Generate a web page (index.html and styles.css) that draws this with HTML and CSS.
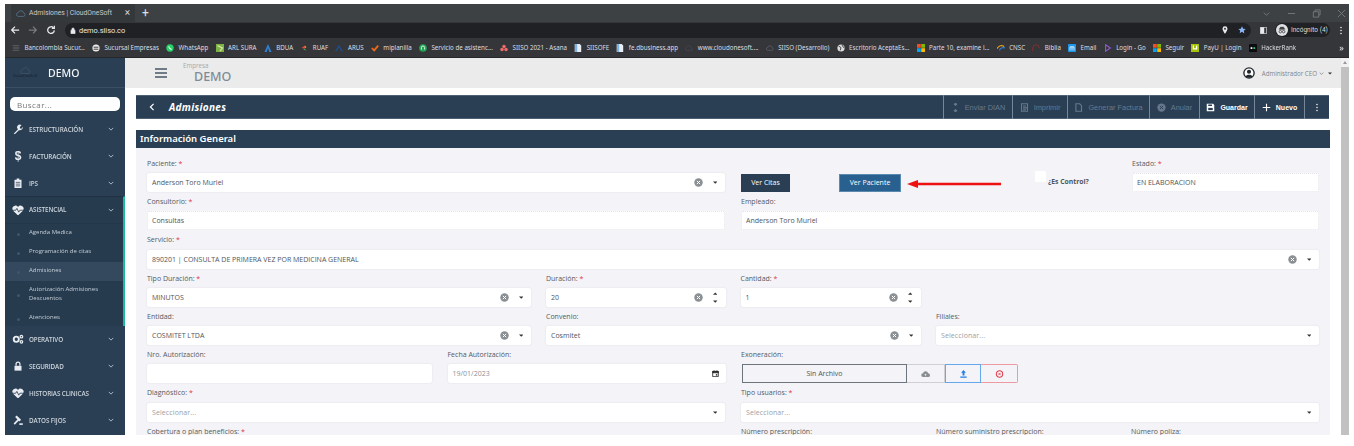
FILE: index.html
```html
<!DOCTYPE html>
<html lang="es">
<head>
<meta charset="utf-8">
<title>Admisiones | CloudOneSoft</title>
<link rel="stylesheet" href="styles.css">
</head>
<body>
<svg class="defs" aria-hidden="true">
  <symbol id="cloud" viewBox="0 0 24 16"><path d="M6 15a4.5 4.5 0 0 1-.6-9A6.5 6.5 0 0 1 18 6.500a4.300 4.300 0 0 1 0 8.500z" fill="none" stroke="currentColor" stroke-width="1.600"/></symbol>
  <symbol id="ms" viewBox="0 0 10 10"><rect width="4.700" height="4.700" fill="#f25022"/><rect x="5.300" width="4.700" height="4.700" fill="#7fba00"/><rect y="5.300" width="4.700" height="4.700" fill="#00a4ef"/><rect x="5.300" y="5.300" width="4.700" height="4.700" fill="#ffb900"/></symbol>
  <symbol id="doc" viewBox="0 0 10 10"><path d="M1 0h6l2 2v8H1z" fill="#e8eef5"/><path d="M1 0h3v10H1z" fill="#7fb2e0"/></symbol>
  <symbol id="clear" viewBox="0 0 10 10"><circle cx="5" cy="5" r="4.700" fill="#8a8f94"/><path d="M3.200 3.200l3.600 3.600M6.800 3.200l-3.600 3.600" stroke="#fff" stroke-width="1.100"/></symbol>
  <symbol id="caret" viewBox="0 0 6 4"><path d="M0 .5h6L3 3.500z" fill="#333"/></symbol>
  <symbol id="chev" viewBox="0 0 8 5"><path d="M1 1l3 3 3-3" fill="none" stroke="currentColor" stroke-width="1.300"/></symbol>
  <symbol id="heart" viewBox="0 0 16 14"><path d="M8 14L1.500 7.500A4 4 0 0 1 8 2.500a4 4 0 0 1 6.500 5z" fill="currentColor"/><path d="M0 7h5l1.500-2.500L9 9.500 10.500 7H16" fill="none" stroke="#2a3f54" stroke-width="1.100"/></symbol>
</svg>

<div class="window">
  <header class="browser">
    <div class="tabstrip">
      <div class="tab">
        <svg class="favicon"><use href="#cloud"/></svg>
        <span class="tab-title">Admisiones | CloudOneSoft</span>
        <span class="tab-x">×</span>
      </div>
      <span class="tab-new">+</span>
      <div class="win-ctrls">
        <svg class="wc" viewBox="0 0 10 10"><path d="M2 4l3 3 3-3" fill="none" stroke="currentColor"/></svg>
        <svg class="wc" viewBox="0 0 10 10"><path d="M1 5h8" stroke="currentColor"/></svg>
        <svg class="wc" viewBox="0 0 10 10"><path d="M1.500 3h6v6h-6zM3.500 3V1h5.500v5.500H7.500" fill="none" stroke="currentColor"/></svg>
        <svg class="wc" viewBox="0 0 10 10"><path d="M1 1l8 8M9 1l-8 8" stroke="currentColor"/></svg>
      </div>
    </div>
    <div class="addressbar">
      <svg class="nav" viewBox="0 0 12 12"><path d="M11 6H2M6 2L2 6l4 4" fill="none" stroke="#e8eaed" stroke-width="1.500"/></svg>
      <svg class="nav" viewBox="0 0 12 12"><path d="M1 6h9M6 2l4 4-4 4" fill="none" stroke="#777a7e" stroke-width="1.500"/></svg>
      <svg class="nav" viewBox="0 0 12 12"><path d="M10 6.500A4 4 0 1 1 8.800 3.200M10 1v3H7" fill="none" stroke="#e8eaed" stroke-width="1.500"/></svg>
      <div class="omnibox">
        <svg class="lock" viewBox="0 0 8 10"><path d="M1 4.500h6V9.500H1zM2.300 4.500V3a1.700 1.700 0 0 1 3.400 0v1.500" fill="#e8eaed" stroke="#e8eaed" stroke-width=".7" fill-rule="evenodd"/></svg>
        <span class="url">demo.siiso.co</span>
        <svg class="pin" viewBox="0 0 8 10"><path d="M4 0a3.300 3.300 0 0 1 3.300 3.300C7.300 5.600 4 10 4 10S.7 5.600.7 3.300A3.300 3.300 0 0 1 4 0z" fill="#e8eaed"/><circle cx="4" cy="3.300" r="1.200" fill="#202124"/></svg>
        <svg class="star" viewBox="0 0 12 12"><path d="M6 .5l1.700 3.600 3.800.5-2.800 2.700.7 3.900L6 8.800 2.600 10.700l.7-3.900L.5 4.600l3.800-.5z" fill="#8ab4f8"/></svg>
      </div>
      <svg class="sidepanel" viewBox="0 0 10 10"><path d="M.5.500h9v9h-9z" fill="none" stroke="#e8eaed"/><path d="M.5.500h5.500v9H.5z" fill="#e8eaed"/></svg>
      <div class="incognito">
        <span class="avatar"><svg viewBox="0 0 12 12"><path d="M2 5h8M4 2.500h4L9 5H3z" stroke="#444" fill="#444" stroke-width=".6"/><circle cx="4" cy="8" r="1.500" fill="none" stroke="#444"/><circle cx="8" cy="8" r="1.500" fill="none" stroke="#444"/></svg></span>
        <span class="inc-text">Incógnito (4)</span>
      </div>
      <svg class="kebab" viewBox="0 0 4 12"><circle cx="2" cy="2" r="1.100"/><circle cx="2" cy="6" r="1.100"/><circle cx="2" cy="10" r="1.100"/></svg>
    </div>
    <nav class="bookmarks">
      <a class="bm"><svg class="bi" viewBox="0 0 10 10"><path d="M1 2h8M1 5h8M1 8h8" stroke="#55585b" stroke-width="1.800"/></svg>Bancolombia Sucur...</a>
      <a class="bm"><svg class="bi" viewBox="0 0 10 10"><circle cx="5" cy="5" r="4.500" fill="#eee"/><path d="M2 4h6M2 6.500h6" stroke="#333" stroke-width="1.200"/></svg>Sucursal Empresas</a>
      <a class="bm"><svg class="bi" viewBox="0 0 10 10"><circle cx="5" cy="5" r="4.600" fill="#25d366"/><path d="M3.300 3c.5 2 1.700 3.300 3.700 3.800" fill="none" stroke="#fff" stroke-width="1.300"/></svg>WhatsApp</a>
      <a class="bm"><svg class="bi" viewBox="0 0 10 10"><rect width="10" height="10" fill="#7db343"/><path d="M2 2l6 3-3 4" fill="none" stroke="#d9e8a8" stroke-width="1.500"/></svg>ARL SURA</a>
      <a class="bm"><svg class="bi" viewBox="0 0 10 10"><path d="M5 0L9.500 10h-3L5 5 3.500 10h-3z" fill="#2f7fd0"/></svg>BDUA</a>
      <a class="bm"><svg class="bi" viewBox="0 0 10 10"><path d="M6 2L2 5l4 1z" fill="#e8483f"/><path d="M6 6l2 2-4-1z" fill="#39b54a"/><path d="M6 2l2 2-2 1z" fill="#f5c518"/></svg>RUAF</a>
      <a class="bm"><svg class="bi" viewBox="0 0 10 10"><path d="M5 1L10 9H8L5 4 2 9H0z" fill="#1d4f91"/></svg>ARUS</a>
      <a class="bm"><svg class="bi" viewBox="0 0 10 10"><path d="M1 5l3 3 5-6" fill="none" stroke="#f06a1d" stroke-width="2.200"/></svg>miplanilla</a>
      <a class="bm"><svg class="bi" viewBox="0 0 10 10"><circle cx="5" cy="5" r="4.800" fill="#22a455"/><path d="M3 7V4.500a2 2 0 0 1 4 0V7" fill="none" stroke="#fff"/></svg>Servicio de asistenc...</a>
      <a class="bm"><svg class="bi" viewBox="0 0 10 10"><circle cx="5" cy="3" r="2.200" fill="#f06a6a"/><circle cx="2.500" cy="7" r="2.200" fill="#f06a6a"/><circle cx="7.500" cy="7" r="2.200" fill="#f06a6a"/></svg>SIISO 2021 - Asana</a>
      <a class="bm"><svg class="bi"><use href="#doc"/></svg>SIISOFE</a>
      <a class="bm"><svg class="bi"><use href="#doc"/></svg>fe.dbusiness.app</a>
      <a class="bm"><svg class="bi dim"><use href="#cloud"/></svg>www.cloudonesoft....</a>
      <a class="bm"><svg class="bi dim2"><use href="#cloud"/></svg>SIISO (Desarrollo)</a>
      <a class="bm"><svg class="bi" viewBox="0 0 10 10"><circle cx="5" cy="5" r="4.500" fill="#ddd"/><path d="M2 2.500l3 2-1 3.500M6 1l2 3 1 1" fill="none" stroke="#444" stroke-width="1.200"/></svg>Escritorio AceptaEs...</a>
      <a class="bm"><svg class="bi"><use href="#ms"/></svg>Parte 10, examine l...</a>
      <a class="bm"><svg class="bi" viewBox="0 0 10 10"><path d="M0 6c2-4 6-5 9-3" fill="none" stroke="#e69a1c" stroke-width="1.500"/><path d="M3 8c1-3 4-4 7-3" fill="none" stroke="#2f7fd0" stroke-width="1.500"/></svg>CNSC</a>
      <a class="bm"><svg class="bi" viewBox="0 0 10 10"><path d="M1 9V5a4 4 0 0 1 8 0" fill="none" stroke="#8c2f2f" stroke-width="1.200"/></svg>Biblia</a>
      <a class="bm"><svg class="bi" viewBox="0 0 10 10"><rect width="10" height="10" rx="1" fill="#1e96e8"/><path d="M2.500 8V3.500h5V8M5 3.500V8" fill="none" stroke="#fff"/></svg>Email</a>
      <a class="bm"><svg class="bi" viewBox="0 0 10 10"><path d="M2 1l6 4-6 4z" fill="none" stroke="#8f5bd6" stroke-width="1.300"/></svg>Login - Go</a>
      <a class="bm"><svg class="bi"><use href="#ms"/></svg>Seguir</a>
      <a class="bm"><svg class="bi" viewBox="0 0 10 10"><rect width="10" height="10" fill="#a6c307"/><path d="M3 2v4h4V2" fill="none" stroke="#fff" stroke-width="1.500"/></svg>PayU | Login</a>
      <a class="bm"><svg class="bi" viewBox="0 0 10 10"><rect width="10" height="10" rx="1" fill="#0b0b12"/><rect x="2" y="4" width="2.200" height="2.200" fill="#fff"/><rect x="5.500" y="4" width="2.200" height="2.200" fill="#2ec866"/></svg>HackerRank</a>
      <span class="bm-more">»</span>
    </nav>
  </header>

  <div class="app">
    <aside class="sidebar">
      <div class="brand">
        <div class="brand-logo"><svg class="brand-cloud"><use href="#cloud"/></svg><span class="brand-sub">CloudOneSoft</span></div>
        <span class="brand-name">DEMO</span>
      </div>
      <div class="search"><input class="search-input" placeholder="Buscar..."></div>
      <ul class="menu">
        <li class="mi"><svg class="mi-ic" viewBox="0 0 12 12"><path d="M1 11l5-5a3 3 0 0 1 4-4.500L8 3.500 8.500 5 10 5.500 11.500 3A3.500 3.500 0 0 1 7 7l-4.500 4.500z" fill="currentColor"/></svg><span class="mi-t">ESTRUCTURACIÓN</span><svg class="mi-c"><use href="#chev"/></svg></li>
        <li class="mi"><span class="mi-ic dollar">$</span><span class="mi-t">FACTURACIÓN</span><svg class="mi-c"><use href="#chev"/></svg></li>
        <li class="mi"><svg class="mi-ic" viewBox="0 0 12 12"><path d="M2 2h2.500V.5h3V2H10v10H2z" fill="currentColor"/><path d="M3.500 5h5M3.500 7h5M3.500 9h5" stroke="#2a3f54" stroke-width=".8"/></svg><span class="mi-t">IPS</span><svg class="mi-c"><use href="#chev"/></svg></li>
        <li class="group">
          <div class="mi open"><svg class="mi-ic"><use href="#heart"/></svg><span class="mi-t">ASISTENCIAL</span><svg class="mi-c"><use href="#chev"/></svg></div>
          <ul class="sub">
            <li class="si">Agenda Medica</li>
            <li class="si">Programación de citas</li>
            <li class="si active">Admisiones</li>
            <li class="si">Autorización Admisiones Descuentos</li>
            <li class="si">Atenciones</li>
          </ul>
        </li>
        <li class="mi"><svg class="mi-ic" viewBox="0 0 14 12"><circle cx="5" cy="6" r="3" fill="none" stroke="currentColor" stroke-width="2.200"/><circle cx="11" cy="3" r="1.500" fill="none" stroke="currentColor" stroke-width="1.400"/><circle cx="11" cy="9" r="1.500" fill="none" stroke="currentColor" stroke-width="1.400"/></svg><span class="mi-t">OPERATIVO</span><svg class="mi-c"><use href="#chev"/></svg></li>
        <li class="mi"><svg class="mi-ic" viewBox="0 0 12 12"><path d="M2 5.500h8V11H2z" fill="currentColor"/><path d="M3.800 5.500V3.500a2.200 2.200 0 0 1 4.400 0v2" fill="none" stroke="currentColor" stroke-width="1.400"/></svg><span class="mi-t">SEGURIDAD</span><svg class="mi-c"><use href="#chev"/></svg></li>
        <li class="mi"><svg class="mi-ic"><use href="#heart"/></svg><span class="mi-t">HISTORIAS CLINICAS</span><svg class="mi-c"><use href="#chev"/></svg></li>
        <li class="mi"><svg class="mi-ic" viewBox="0 0 12 12"><path d="M4.500 .5l5 5-1.800 1.800-5-5z" fill="currentColor"/><path d="M5.800 4.600L1 9.800l1.300 1.300 5-5" fill="currentColor"/><path d="M7.500 9.500h4v1.800h-4z" fill="currentColor"/></svg><span class="mi-t">DATOS FIJOS</span><svg class="mi-c"><use href="#chev"/></svg></li>
      </ul>
    </aside>

    <main class="main">
      <div class="topbar">
        <div class="burger"><i></i><i></i><i></i></div>
        <div class="company"><span class="company-l">Empresa</span><span class="company-n">DEMO</span></div>
        <div class="user">
          <svg class="user-ic" viewBox="0 0 14 14"><circle cx="7" cy="7" r="6" fill="#fff" stroke="#22282e" stroke-width="1.600"/><circle cx="7" cy="5.500" r="2.400" fill="#22282e"/><path d="M3 11c1-2.500 7-2.500 8 0-1.500 2-6.500 2-8 0z" fill="#22282e"/></svg>
          <span class="user-n">Administrador CEO</span>
          <svg class="user-c"><use href="#chev"/></svg>
          <svg class="user-d"><use href="#caret"/></svg>
        </div>
      </div>

      <div class="content">
        <div class="toolbar">
          <div class="tb-title">
            <svg class="tb-back" viewBox="0 0 6 10"><path d="M5 1L1 5l4 4" fill="none" stroke="#fff" stroke-width="1.500"/></svg>
            <span>Admisiones</span>
          </div>
          <div class="tb-actions">
            <button class="tb w-dian off"><svg class="tb-i" viewBox="0 0 6 12"><path d="M3 0v4M1 2.500L3 0l2 2.500M3 12V8M1 9.500L3 12l2-2.500" fill="none" stroke="currentColor" stroke-width="1.500"/></svg>Enviar DIAN</button>
            <button class="tb w-print off"><svg class="tb-i" viewBox="0 0 12 12"><path d="M2 1h8v10H2zM4 4h4M4 6.500h6M4 9h4" fill="none" stroke="currentColor" stroke-width="1.400"/></svg>Imprimir</button>
            <button class="tb w-fact off"><svg class="tb-i" viewBox="0 0 12 12"><path d="M2.500 1H7.500L10 3.500V11H2.500z" fill="none" stroke="currentColor" stroke-width="1.500"/></svg>Generar Factura</button>
            <button class="tb w-anul off"><svg class="tb-i" viewBox="0 0 12 12"><circle cx="6" cy="6" r="5.500" fill="currentColor"/><path d="M3.800 3.800l4.400 4.400M8.200 3.800l-4.400 4.400" stroke="#2a3f54" stroke-width="1.300"/></svg>Anular</button>
            <button class="tb w-save"><svg class="tb-i" viewBox="0 0 12 12"><path d="M1 1h8.500L11 2.500V11H1z" fill="#fff"/><rect x="3" y="6.500" width="6" height="3" fill="#2a3f54"/><rect x="3" y="2" width="5" height="2" fill="#2a3f54"/></svg>Guardar</button>
            <button class="tb w-new"><svg class="tb-i" viewBox="0 0 12 12"><path d="M6 1v10M1 6h10" stroke="#fff" stroke-width="1.500"/></svg>Nuevo</button>
            <button class="tb w-more"><svg class="tb-k" viewBox="0 0 4 12"><circle cx="2" cy="2" r="1" fill="#fff"/><circle cx="2" cy="6" r="1" fill="#fff"/><circle cx="2" cy="10" r="1" fill="#fff"/></svg></button>
          </div>
        </div>

        <section class="panel">
          <h2 class="panel-h">Información General</h2>
          <div class="panel-b">
            <div class="row r-1">
              <div class="fg"><label class="lb">Paciente: <em>*</em></label>
                <div class="ctl"><span class="val">Anderson Toro Muriel</span><svg class="x"><use href="#clear"/></svg><svg class="car"><use href="#caret"/></svg></div></div>
              <div class="fg"><label class="lb">&nbsp;</label>
                <div class="acts">
                  <button class="btn navy">Ver Citas</button>
                  <button class="btn blue">Ver Paciente</button>
                  <label class="chk"><span class="box"></span><span class="chk-t">¿Es Control?</span></label>
                </div></div>
              <div class="fg"><label class="lb">Estado: <em>*</em></label>
                <div class="ctl ro"><span class="val">EN ELABORACION</span></div></div>
            </div>
            <div class="row r-2">
              <div class="fg"><label class="lb">Consultorio: <em>*</em></label><div class="ctl ro"><span class="val">Consultas</span></div></div>
              <div class="fg"><label class="lb">Empleado:</label><div class="ctl ro"><span class="val">Anderson Toro Muriel</span></div></div>
            </div>
            <div class="row">
              <div class="fg"><label class="lb">Servicio: <em>*</em></label>
                <div class="ctl"><span class="val">890201 | CONSULTA DE PRIMERA VEZ POR MEDICINA GENERAL</span><svg class="x"><use href="#clear"/></svg><svg class="car"><use href="#caret"/></svg></div></div>
            </div>
            <div class="row r-4">
              <div class="fg"><label class="lb">Tipo Duración: <em>*</em></label>
                <div class="ctl"><span class="val">MINUTOS</span><svg class="x"><use href="#clear"/></svg><svg class="car"><use href="#caret"/></svg></div></div>
              <div class="fg"><label class="lb">Duración: <em>*</em></label>
                <div class="ctl"><span class="val">20</span><svg class="x"><use href="#clear"/></svg><span class="spin"><svg class="up"><use href="#caret"/></svg><svg class="car"><use href="#caret"/></svg></span></div></div>
              <div class="fg"><label class="lb">Cantidad: <em>*</em></label>
                <div class="ctl"><span class="val">1</span><svg class="x"><use href="#clear"/></svg><span class="spin"><svg class="up"><use href="#caret"/></svg><svg class="car"><use href="#caret"/></svg></span></div></div>
            </div>
            <div class="row r-5">
              <div class="fg"><label class="lb">Entidad:</label>
                <div class="ctl"><span class="val">COSMITET LTDA</span><svg class="x"><use href="#clear"/></svg><svg class="car"><use href="#caret"/></svg></div></div>
              <div class="fg"><label class="lb">Convenio:</label>
                <div class="ctl"><span class="val">Cosmitet</span><svg class="x"><use href="#clear"/></svg><svg class="car"><use href="#caret"/></svg></div></div>
              <div class="fg"><label class="lb">Filiales:</label>
                <div class="ctl"><span class="val ph">Seleccionar...</span><svg class="car"><use href="#caret"/></svg></div></div>
            </div>
            <div class="row r-6">
              <div class="fg"><label class="lb">Nro. Autorización:</label><div class="ctl"></div></div>
              <div class="fg"><label class="lb">Fecha Autorización:</label>
                <div class="ctl"><span class="val date">19/01/2023</span><svg class="cal" viewBox="0 0 10 10"><path d="M1 2h8v7.500H1z" fill="none" stroke="#222" stroke-width="1.200"/><path d="M1 2h8v2H1zM3 .5v2M7 .5v2" stroke="#222" fill="#222"/><rect x="5.500" y="6" width="2" height="2" fill="#222"/></svg></div></div>
              <div class="fg"><label class="lb">Exoneración:</label>
                <div class="file">
                  <div class="f-name">Sin Archivo</div>
                  <button class="f-b f-cloud"><svg class="f-i" viewBox="0 0 12 10"><path d="M3 9a2.500 2.500 0 0 1-.3-5A3.500 3.500 0 0 1 9.500 4 2.500 2.500 0 0 1 9.500 9z" fill="#888c90"/><path d="M6 8V5M4.800 6L6 4.800 7.200 6" stroke="#fff" stroke-width=".8" fill="none"/></svg></button>
                  <button class="f-b f-up"><svg class="f-i" viewBox="0 0 10 10"><path d="M5 0L8 3.500H6.200V7H3.800V3.500H2z M1 8h8v1.800H1z" fill="#1e7fe8"/></svg></button>
                  <button class="f-b f-del"><svg class="f-i" viewBox="0 0 10 10"><circle cx="5" cy="5" r="4" fill="none" stroke="#e0404f" stroke-width="1.300"/><path d="M3.500 3.500l3 3M6.500 3.500l-3 3" stroke="#e0404f"/></svg></button>
                </div></div>
            </div>
            <div class="row r-2">
              <div class="fg"><label class="lb">Diagnóstico: <em>*</em></label>
                <div class="ctl"><span class="val ph">Seleccionar...</span><svg class="car"><use href="#caret"/></svg></div></div>
              <div class="fg"><label class="lb">Tipo usuarios: <em>*</em></label>
                <div class="ctl"><span class="val ph">Seleccionar...</span><svg class="car"><use href="#caret"/></svg></div></div>
            </div>
            <div class="row r-8">
              <div class="fg"><label class="lb">Cobertura o plan beneficios: <em>*</em></label></div>
              <div class="fg"><label class="lb">Número prescripción:</label></div>
              <div class="fg"><label class="lb">Número suministro prescripcion:</label></div>
              <div class="fg"><label class="lb">Número poliza:</label></div>
            </div>
          </div>
          <svg class="annot" viewBox="0 0 94 8"><path d="M94 4H9" stroke="#ee1111" stroke-width="2.400"/><path d="M0 4l11-4v8z" fill="#ee1111"/></svg>
        </section>
      </div>

      <div class="scrollbar"><span class="sb-up"></span><span class="sb-thumb"></span></div>
    </main>
  </div>
</div>
</body>
</html>
```

FILE: styles.css
```css
* { box-sizing: border-box; }
html, body { margin: 0; height: 100%; }
body {
  background: #fff;
  overflow: hidden;
  padding: 4px 5px 11px 5px;
  font-family: "Open Sans", "Noto Sans", sans-serif;
  font-size: 7px;
  color: #495057;
}
.defs { position: absolute; width: 0; height: 0; }
ul { list-style: none; margin: 0; padding: 0; }
button { font: inherit; border: 0; padding: 0; }
svg { display: block; flex: none; }

.window { width: 1344px; height: 431px; display: flex; flex-direction: column; overflow: hidden; filter: blur(.3px); }

/* browser */
.browser { height: 54px; background: #35363a; flex: none; font-family: Roboto, "Noto Sans", sans-serif; color: #e8eaed; }
.tabstrip { height: 18px; background: #3e4144; display: flex; align-items: flex-end; padding-left: 6px; }
.tab { width: 124px; height: 18px; background: #35383b; display: flex; align-items: center; padding: 0 5px 0 5px; }
.favicon { width: 10px; height: 7px; color: #5d7f9c; }
.tab-title { margin-left: 3px; font-size: 6.800px; color: #c5c8cb; white-space: nowrap; flex: 1; }
.tab-x { font-size: 10px; color: #d0d3d6; line-height: 1; }
.tab-new { margin-left: 7px; align-self: center; font-size: 12px; line-height: 1; color: #dfe1e4; }
.win-ctrls { margin-left: auto; align-self: center; display: flex; gap: 16px; margin-right: 3px; }
.wc { width: 9px; height: 9px; color: #777a7e; }

.addressbar { height: 16px; display: flex; align-items: center; padding-left: 5px; }
.nav { width: 10px; height: 10px; margin-right: 8px; }
.omnibox { width: 1186px; height: 15px; margin-left: 1px; border-radius: 8px; background: #202124; display: flex; align-items: center; padding: 0 5px 0 5px; }
.lock { width: 6px; height: 7px; }
.url { margin-left: 3px; font-size: 7.400px; color: #e8eaed; }
.pin { width: 6px; height: 8px; margin-left: auto; }
.star { width: 8px; height: 8px; margin-left: 10px; }
.sidepanel { width: 7px; height: 7px; margin-left: 9px; }
.incognito { width: 55px; height: 14px; margin-left: 8px; border-radius: 7px; background: #202124; display: flex; align-items: center; padding-left: 1px; }
.avatar { width: 12px; height: 12px; border-radius: 50%; background: #dfe1e5; display: block; padding: 1px; }
.inc-text { margin-left: 3px; font-size: 6.500px; color: #d8dadd; white-space: nowrap; }
.kebab { width: 4px; height: 9px; margin-left: 9px; fill: #e8eaed; }

.bookmarks { height: 20px; border-bottom: 1px solid #26272a; display: flex; align-items: center; justify-content: space-between; padding: 0 5px 0 7px; font-family: "Noto Sans", sans-serif; }
.bm { display: flex; align-items: center; gap: 4.500px; font-size: 6.200px; color: #dcdee1; white-space: nowrap; }
.bi { width: 8px; height: 8px; }
.bi.dim { color: #4a5058; }
.bi.dim2 { color: #66717c; }
.bm-more { font-size: 9px; margin-left: 36px; line-height: 1; }

/* layout */
.app { flex: 1; min-height: 0; display: flex; }

/* sidebar */
.sidebar { width: 120px; flex: none; background: #2a3f54; color: #d8dfe6; }
.brand { height: 30px; display: flex; align-items: center; padding-left: 5px; border-bottom: 1px solid #3a4f63; }
.brand-logo { width: 30px; display: flex; flex-direction: column; align-items: center; }
.brand-cloud { width: 11px; height: 7px; color: #43586d; }
.brand-sub { font-size: 3.800px; line-height: 4px; color: #15222f; white-space: nowrap; }
.brand-name { margin-left: 8px; font-size: 10.500px; font-weight: 500; color: #f2f4f6; font-family: "Noto Sans", sans-serif; }
.search { height: 27.500px; padding: 9px 5px 0 5px; }
.search-input { display: block; width: 110px; height: 14px; border: 0; border-radius: 5px; background: #fff; padding: 0 7px; font: 8px "Open Sans", sans-serif; letter-spacing: .4px; outline: 0; }
.search-input::placeholder { color: #777; }
.mi { height: 27px; display: flex; align-items: center; padding: 0 11px 0 7px; }
.mi-ic { width: 12px; height: 10.500px; color: #e9edf1; }
.dollar { font: 700 12px/10px "Liberation Sans", sans-serif; text-align: center; }
.mi-t { margin-left: 5px; flex: 1; font-size: 6.300px; letter-spacing: -.1px; font-weight: 600; color: #cdd5dc; white-space: nowrap; }
.mi-c { width: 6px; height: 4px; color: #aeb9c3; }
.group { background: #273b4f; border-right: 2px solid #1abb9c; height: 130px; border-top: 1px solid #1f3142; margin-top: -.5px; margin-bottom: -.5px; }
.group .mi.open { height: 26.500px; padding-right: 9px; border-bottom: 1px solid #22354a; }
.si { min-height: 19px; display: flex; align-items: center; padding: 0 4px 0 24px; font-size: 6px; line-height: 9.500px; color: #c4ced6; position: relative; }
.si:nth-child(4) { min-height: 27.500px; }
.si::before { content: ""; position: absolute; left: 12px; top: 50%; width: 3px; height: 3px; border-radius: 50%; background: #3f556a; }
.si.active { background: #34495e; }

/* main */
.main { flex: 1; min-width: 0; display: grid; grid-template-columns: 1fr 8px; grid-template-rows: 30px 1fr; background: #fff; }
.topbar { grid-column: 1; background: #ebebeb; display: flex; align-items: center; padding: 0 9px 0 30px; }
.burger { width: 12px; display: grid; row-gap: 2.500px; }
.burger i { display: block; height: 1.600px; background: #6f7c88; }
.company { margin-left: 16px; display: flex; flex-direction: column; height: 24px; }
.company-l { font-size: 6.200px; line-height: 9px; color: #a4a9ae; }
.company-n { margin-left: 11px; font-size: 12.500px; line-height: 13px; font-weight: 500; color: #7f8b96; font-family: "Noto Sans", sans-serif; }
.user { margin-left: auto; display: flex; align-items: center; }
.user-ic { width: 12px; height: 12px; }
.user-n { margin-left: 7px; font-size: 6.200px; color: #80868c; white-space: nowrap; }
.user-c { width: 5px; height: 3px; margin-left: 2px; color: #80868c; }
.user-d { width: 4px; height: 3px; margin-left: 4px; }
.content { grid-column: 1; grid-row: 2; padding: 7px 12px 0 11px; min-height: 0; overflow: hidden; }
.scrollbar { grid-column: 2; grid-row: 1 / 3; background: #f1f1f1; display: flex; flex-direction: column; }
.sb-up { height: 9px; position: relative; }
.sb-up::before { content: ""; position: absolute; left: 2px; top: 3px; border: 2px solid transparent; border-bottom: 3px solid #9a9a9a; border-top: 0; }
.sb-thumb { flex: 1; background: #c1c1c1; }

/* toolbar */
.toolbar { height: 24px; background: #2a3f54; display: flex; justify-content: space-between; box-shadow: inset 0 1px 0 #4d6174, inset 0 -1px 0 #4d6174; }
.tb-title { display: flex; align-items: center; padding-left: 13px; color: #fff; font: italic 700 10px "Noto Sans", sans-serif; letter-spacing: .3px; }
.tb-back { width: 6px; height: 8px; margin-right: 14px; }
.tb-actions { display: flex; }
.tb { height: 24px; background: transparent; border-left: 1px solid #77879a; display: flex; align-items: center; justify-content: center; gap: 5px; color: #fff; font: 500 7.400px "Liberation Sans", Arial, sans-serif; }
.tb.off { color: #66798c; }
.tb-i { width: 9px; height: 9px; }
.tb-k { width: 4px; height: 9px; }
.w-dian { width: 69px; }
.w-print { width: 55px; }
.w-fact { width: 82px; }
.w-anul { width: 50px; }
.w-save { width: 55px; font-weight: 700; font-size: 7px; }
.w-new { width: 50px; font-weight: 700; font-size: 7px; }
.w-more { width: 25px; }

/* panel */
.panel { margin-top: 11px; margin-right: -1px; height: 305px; background: #f3f3f8; position: relative; overflow: hidden; }
.panel-h { margin: 0; height: 18px; background: #2a3f54; color: #fff; padding-left: 4px; font: 600 9.500px/18px "Noto Sans", sans-serif; }
.panel-b { padding: 5.700px 11px 0 11px; }
.row { display: grid; column-gap: 16px; }
.fg { min-width: 0; }
.r-1 { grid-template-columns: 578px 375px 1fr; }
.r-2 { grid-template-columns: 578px 1fr; }
.r-4 { grid-template-columns: 384px 179.500px 180px 1fr; column-gap: 15px; }
.r-5 { grid-template-columns: 384px 375px 1fr; column-gap: 15px; }
.r-6 { grid-template-columns: 285px 278px 1fr; column-gap: 15.500px; }
.r-8 { grid-template-columns: 579px 180px 180px 1fr; column-gap: 15px; }
.lb { display: block; height: 19.300px; line-height: 19.300px; white-space: nowrap; color: #555b61; font-size: 7px; }
.lb em { color: #dc3545; font-style: normal; }
.ctl { height: 19px; background: #fff; border-radius: 2px; box-shadow: 0 0 2px rgba(0,0,0,.1); display: flex; align-items: center; padding: 0 7px 0 5px; }
.ctl.ro { box-shadow: none; border: 1px dotted #e4e4ea; padding-left: 4px; }
.val { flex: 1; white-space: nowrap; overflow: hidden; color: #4f555b; }
.val.ph { color: #9aa0a6; letter-spacing: .1px; }
.val.date { color: #8a9096; }
.x { width: 9px; height: 9px; margin-right: 10px; }
.car { width: 4.500px; height: 3px; margin-right: 1px; }
.spin { display: flex; flex-direction: column; gap: 5px; }
.up { width: 4.500px; height: 3px; transform: rotate(180deg); }
.cal { width: 7px; height: 7px; }

.acts { height: 19px; display: flex; align-items: center; padding-top: 1px; }
.btn { height: 18px; display: block; color: #fff; font-size: 7px; }
.navy { width: 49px; background: #2a3f54; }
.blue { width: 62px; margin-left: 49px; background: #286090; border: 1px solid #5a89b0; }
.chk { margin-left: 134px; margin-top: -10px; display: flex; align-items: center; gap: 2px; }
.box { width: 11px; height: 11px; background: #fff; border-radius: 1px; margin-top: -2px; }
.chk-t { font-size: 6.800px; font-weight: 700; color: #4f555b; white-space: nowrap; margin-top: 8px; }

.file { height: 19px; margin-left: 1px; display: flex; }
.f-name { width: 165px; border: 1px solid #6c757d; display: flex; align-items: center; justify-content: center; color: #4f555b; }
.f-b { background: transparent; display: flex; align-items: center; justify-content: center; border-style: solid; border-width: 1px; }
.f-cloud { width: 38px; border-color: #ced0d4; border-left: 0; }
.f-up { width: 36px; border-color: #66a8f0; }
.f-del { width: 37px; border-color: #ee9aa4; border-left: 0; border-radius: 0 2px 2px 0; }
.f-i { width: 9px; height: 8px; }

.annot { position: absolute; left: 771px; top: 50px; width: 94px; height: 8px; }
```
